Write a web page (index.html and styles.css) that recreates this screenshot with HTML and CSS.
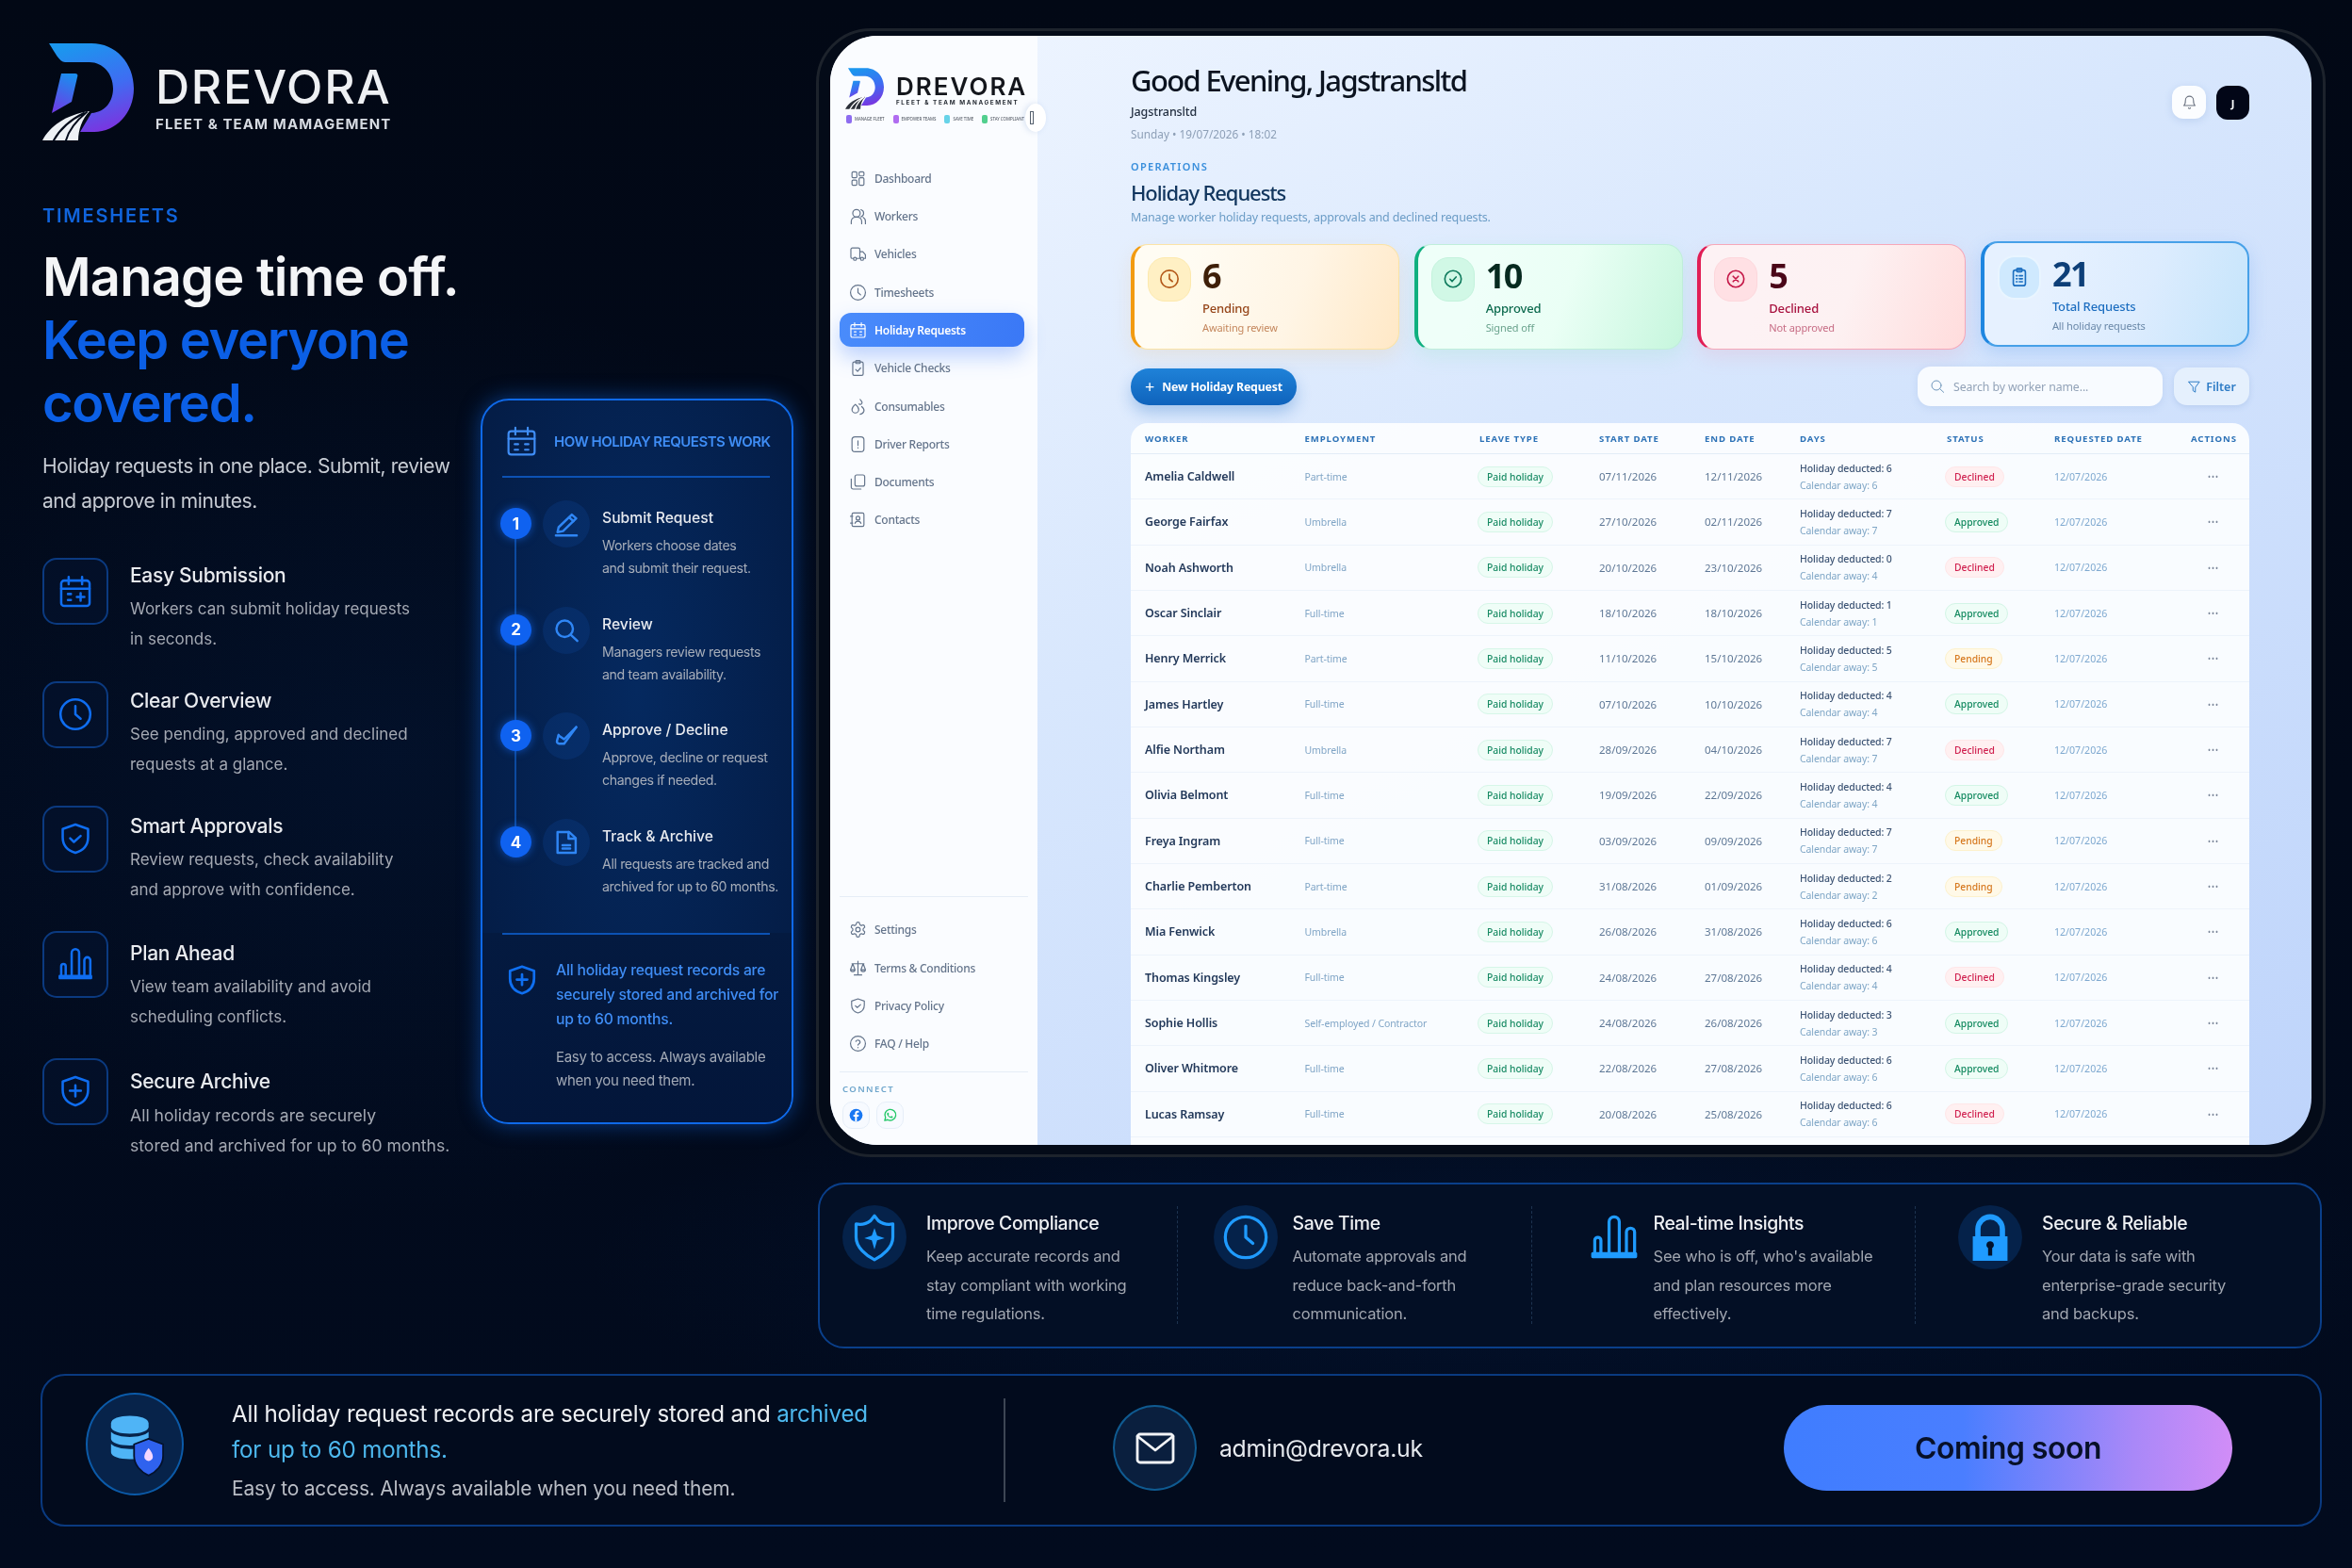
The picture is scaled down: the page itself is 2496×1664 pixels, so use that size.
FILE: index.html
```html
<!DOCTYPE html>
<html lang="en">
<head>
<meta charset="utf-8">
<title>Drevora - Holiday Requests</title>
<link rel="stylesheet" href="styles.css">
</head>
<body>
<svg class="sprite" aria-hidden="true">
  <symbol id="i-cal-plus" viewBox="0 0 24 24"><rect x="2.5" y="4.5" width="19" height="17" rx="2"/><path d="M2.5 10h19M7.5 2v5M16.5 2v5M15.5 13v5M13 15.5h5M7 13.5h2M7 17.5h2"/></symbol>
  <symbol id="i-cal" viewBox="0 0 24 24"><rect x="2.5" y="4.5" width="19" height="17" rx="2"/><path d="M2.5 10h19M7.5 2v5M16.5 2v5M7 14h2.5M14.5 14h2.5M7 18h2.5M14.5 18h2.5"/></symbol>
  <symbol id="i-clock" viewBox="0 0 24 24"><circle cx="12" cy="12" r="10"/><path d="M12 6.5V12l3.5 3"/></symbol>
  <symbol id="i-shield-check" viewBox="0 0 24 24"><path d="M12 2.500l8.500 3V11c0 5.500-3.600 9-8.500 10.500C7.100 20 3.500 16.500 3.500 11V5.500z"/><path d="M8.500 11.800l2.500 2.400 4.500-4"/></symbol>
  <symbol id="i-shield-plus" viewBox="0 0 24 24"><path d="M12 2.500l8.500 3V11c0 5.500-3.600 9-8.500 10.500C7.100 20 3.500 16.500 3.500 11V5.500z"/><path d="M12 8v7.500M8.300 11.700h7.400"/></symbol>
  <symbol id="i-shield-star" viewBox="0 0 24 24"><path d="M12 1.500L14 4c2 1.500 4.500 2 7 1.500V12c0 5-5 9-9 11-4-2-9-6-9-11V5.500C5.500 6 8 5.500 10 4z"/><path fill="currentColor" stroke="none" d="M12 7.500l1.300 3.700 3.700 1.300-3.700 1-1.300 4.500-1.300-4.500-3.700-1 3.700-1.300z"/></symbol>
  <symbol id="i-bars" viewBox="0 0 24 24"><path d="M1.500 21.500h21V20h-21zM2.500 20v-6.500a1.500 1.500 0 0 1 3 0V20M9.500 20V4.500a2.500 2.500 0 0 1 5 0V20M18 20V9.500a2 2 0 0 1 4 0V20"/></symbol>
  <symbol id="i-pencil" viewBox="0 0 24 24"><path d="M5 15L17 3.500l4 3.500L9 18.500l-5 1z"/><path d="M14.500 6l4 3.500M2.500 22.500h19"/></symbol>
  <symbol id="i-search" viewBox="0 0 24 24"><circle cx="10.500" cy="10.500" r="7.500"/><path d="M16 16l6 5.500"/></symbol>
  <symbol id="i-approve" viewBox="0 0 24 24"><path d="M21 4L10 19H5.500a2 2 0 0 1-2-2.500L5 11"/><path d="M5 11.500l5 3.500L21 4"/></symbol>
  <symbol id="i-file" viewBox="0 0 24 24"><path d="M4 2.500h10.500L20.500 8v13.500H4z"/><path d="M14 2.500V8.500h6.500M8.500 14.500h7M8.500 17.500h7"/></symbol>
  <symbol id="i-grid" viewBox="0 0 24 24"><rect x="4" y="3" width="6.500" height="8" rx="1.500"/><rect x="13.500" y="3" width="6.500" height="5.500" rx="1.500"/><rect x="13.500" y="11" width="6.500" height="10" rx="1.500"/><rect x="4" y="14" width="6.500" height="7" rx="1.500"/></symbol>
  <symbol id="i-users" viewBox="0 0 24 24"><circle cx="10" cy="8" r="5"/><path d="M3 22v-3a6 6 0 0 1 6-6h2a6 6 0 0 1 6 6v3M16 3.200a5 5 0 0 1 0 9.600M19 13.500a6 6 0 0 1 3 5.500v3"/></symbol>
  <symbol id="i-truck" viewBox="0 0 24 24"><path d="M6 18H4.500a2 2 0 0 1-2-2V6a2 2 0 0 1 2-2h8a2 2 0 0 1 2 2v12H10M14.500 9h4l3.500 4v5h-2.500"/><circle cx="8" cy="18.500" r="2"/><circle cx="17.500" cy="18.500" r="2"/></symbol>
  <symbol id="i-clip-check" viewBox="0 0 24 24"><rect x="5" y="4" width="14" height="18" rx="2"/><rect x="9" y="2" width="6" height="4" rx="1"/><path d="M9 14l2.500 2.500 4-4.500"/></symbol>
  <symbol id="i-clip-list" viewBox="0 0 24 24"><rect x="5" y="4" width="14" height="18" rx="2.500"/><rect x="9" y="2" width="6" height="4" rx="1"/><path d="M8.500 10.500h1M12 10.500h3.500M8.500 14h1M12 14h3.500M8.500 17.500h1M12 17.500h3.500"/></symbol>
  <symbol id="i-drops" viewBox="0 0 24 24"><path d="M8.500 9c-3 2.500-4.500 5-4.500 7a4.500 4.500 0 0 0 9 0c0-2-1.500-4.500-4.500-7z"/><path d="M15 2.500c1 1.500 2.500 2.500 2.500 4a2.500 2.500 0 0 1-4 2M17 12c2.500 2 3.500 4 3 6a6 6 0 0 1-5 4.200"/></symbol>
  <symbol id="i-report" viewBox="0 0 24 24"><path d="M8 2h8a4 4 0 0 1 4 4v12a4 4 0 0 1-4 4H8a4 4 0 0 1-4-4V6a4 4 0 0 1 4-4z"/><path d="M12 7.500v6M12 16.500v.5"/></symbol>
  <symbol id="i-docs" viewBox="0 0 24 24"><rect x="8" y="2.500" width="13" height="15" rx="2.500"/><path d="M16 21.500H5.500a2.500 2.500 0 0 1-2.500-2.500V8"/></symbol>
  <symbol id="i-contact" viewBox="0 0 24 24"><rect x="4" y="3" width="16" height="18" rx="2"/><circle cx="12" cy="10" r="2.500"/><path d="M8 17c.5-2 2-3 4-3s3.500 1 4 3M2 7.500h3M2 16.500h3"/></symbol>
  <symbol id="i-gear" viewBox="0 0 24 24"><path d="M12.220 2h-.44a2 2 0 0 0-2 2v.18a2 2 0 0 1-1 1.730l-.43.250a2 2 0 0 1-2 0l-.15-.080a2 2 0 0 0-2.730.730l-.22.380a2 2 0 0 0 .730 2.730l.15.100a2 2 0 0 1 1 1.720v.510a2 2 0 0 1-1 1.740l-.15.090a2 2 0 0 0-.730 2.730l.22.380a2 2 0 0 0 2.730.730l.15-.080a2 2 0 0 1 2 0l.43.250a2 2 0 0 1 1 1.730V20a2 2 0 0 0 2 2h.44a2 2 0 0 0 2-2v-.18a2 2 0 0 1 1-1.730l.43-.250a2 2 0 0 1 2 0l.15.080a2 2 0 0 0 2.730-.730l.22-.390a2 2 0 0 0-.730-2.730l-.15-.080a2 2 0 0 1-1-1.740v-.5a2 2 0 0 1 1-1.740l.15-.090a2 2 0 0 0 .730-2.730l-.22-.380a2 2 0 0 0-2.730-.730l-.15.080a2 2 0 0 1-2 0l-.43-.250a2 2 0 0 1-1-1.730V4a2 2 0 0 0-2-2z"/><circle cx="12" cy="12" r="3"/></symbol>
  <symbol id="i-scale" viewBox="0 0 24 24"><path d="M12 2.500V21M7 21h10M4 6h16M5 6L2 14c0 1.500 1.300 2.500 3 2.500S8 15.500 8 14zM19 6l-3 8c0 1.500 1.300 2.500 3 2.500s3-1 3-2.500zM2 14h6M16 14h6"/></symbol>
  <symbol id="i-help" viewBox="0 0 24 24"><circle cx="12" cy="12" r="10"/><path d="M9.200 9a3 3 0 0 1 5.700 1c0 2-2.900 2.500-2.900 4M12 17.200v.3"/></symbol>
  <symbol id="i-check-c" viewBox="0 0 24 24"><circle cx="12" cy="12" r="9.500"/><path d="M8.500 12.300l2.500 2.500 4.500-5"/></symbol>
  <symbol id="i-x-c" viewBox="0 0 24 24"><circle cx="12" cy="12" r="9.500"/><path d="M9 9l6 6M15 9l-6 6"/></symbol>
  <symbol id="i-bell" viewBox="0 0 24 24"><path d="M6 9a6 6 0 0 1 12 0c0 6 2.500 8 2.500 8h-17S6 15 6 9zM10.500 20.500a1.600 1.600 0 0 0 3 0"/></symbol>
  <symbol id="i-funnel" viewBox="0 0 24 24"><path d="M3 3.500h18L14 13v8l-4-2.500V13z"/></symbol>
  <symbol id="i-mail" viewBox="0 0 24 24"><rect x="2.500" y="4.500" width="19" height="15" rx="1.500"/><path d="M2.500 5.500L12 13l9.500-7.500"/></symbol>
</svg>

<main class="page">
  <div class="top">
    <section class="intro">
      <div class="brand">
        <svg class="logo-mark" viewBox="0 0 97 103">
          <defs>
            <linearGradient id="lg1" x1="0.3" y1="0" x2="0.6" y2="1"><stop offset="0" stop-color="#1b97ee"/><stop offset=".55" stop-color="#3f6cf2"/><stop offset="1" stop-color="#7a35e0"/></linearGradient>
            <linearGradient id="lg2" x1="0.6" y1="0" x2="0.3" y2="1"><stop offset="0" stop-color="#1b8dee"/><stop offset="1" stop-color="#6d3de6"/></linearGradient>
          </defs>
          <path fill="url(#lg1)" d="M7 0H52C78 0 97 21 97 48C97 74 78 94 55 94H40L52 74C68 73 75 60 75 48C75 32 64 20 50 20H24C18 20 13 9 7 0Z"/>
          <path fill="url(#lg2)" d="M20 32H34C37 32 38 33 37 36L31 62L10 74Z"/>
          <path fill="#eef1f5" d="M0 103C8 88 24 76 50 72C42 80 38 92 38 103Z"/>
          <path stroke="#020a1a" stroke-width="2" d="M12 103C18 92 28 82 44 74M25 103C28 92 36 82 47 73"/>
        </svg>
        <div class="brand-text">
          <div class="brand-name">DREVORA</div>
          <div class="brand-tag">FLEET &amp; TEAM MAMAGEMENT</div>
        </div>
      </div>
      <div class="eyebrow">TIMESHEETS</div>
      <h1 class="headline">Manage time off.<br><span class="headline-blue">Keep everyone<br>covered.</span></h1>
      <p class="lede">Holiday requests in one place. Submit, review<br>and approve in minutes.</p>
      <ul class="features">
        <li class="feature"><span class="feature-box"><svg class="ic-feature"><use href="#i-cal-plus"/></svg></span><div><h3>Easy Submission</h3><p>Workers can submit holiday requests<br>in seconds.</p></div></li>
        <li class="feature"><span class="feature-box"><svg class="ic-feature"><use href="#i-clock"/></svg></span><div><h3>Clear Overview</h3><p>See pending, approved and declined<br>requests at a glance.</p></div></li>
        <li class="feature"><span class="feature-box"><svg class="ic-feature"><use href="#i-shield-check"/></svg></span><div><h3>Smart Approvals</h3><p>Review requests, check availability<br>and approve with confidence.</p></div></li>
        <li class="feature"><span class="feature-box"><svg class="ic-feature"><use href="#i-bars"/></svg></span><div><h3>Plan Ahead</h3><p>View team availability and avoid<br>scheduling conflicts.</p></div></li>
        <li class="feature"><span class="feature-box"><svg class="ic-feature"><use href="#i-shield-plus"/></svg></span><div><h3>Secure Archive</h3><p>All holiday records are securely<br>stored and archived for up to 60 months.</p></div></li>
      </ul>
    </section>

    <aside class="how">
      <header class="how-head"><svg class="ic-how-head"><use href="#i-cal"/></svg><span>HOW HOLIDAY REQUESTS WORK</span></header>
      <ol class="steps">
        <li class="step"><span class="step-num">1</span><span class="step-icon"><svg><use href="#i-pencil"/></svg></span><div><h4>Submit Request</h4><p>Workers choose dates<br>and submit their request.</p></div></li>
        <li class="step"><span class="step-num">2</span><span class="step-icon"><svg><use href="#i-search"/></svg></span><div><h4>Review</h4><p>Managers review requests<br>and team availability.</p></div></li>
        <li class="step"><span class="step-num">3</span><span class="step-icon"><svg><use href="#i-approve"/></svg></span><div><h4>Approve / Decline</h4><p>Approve, decline or request<br>changes if needed.</p></div></li>
        <li class="step"><span class="step-num">4</span><span class="step-icon"><svg><use href="#i-file"/></svg></span><div><h4>Track &amp; Archive</h4><p>All requests are tracked and<br>archived for up to 60 months.</p></div></li>
      </ol>
      <div class="how-foot">
        <svg class="ic-how-foot"><use href="#i-shield-plus"/></svg>
        <div>
          <p class="how-foot-blue">All holiday request records are<br>securely stored and archived for<br>up to 60 months.</p>
          <p class="how-foot-grey">Easy to access. Always available<br>when you need them.</p>
        </div>
      </div>
    </aside>

    <div class="device">
      <div class="screen">
        <nav class="sidebar">
          <div class="side-brand">
            <svg class="side-mark" viewBox="0 0 97 103">
              <defs>
                <linearGradient id="lg3" x1="0.3" y1="0" x2="0.6" y2="1"><stop offset="0" stop-color="#1b97ee"/><stop offset=".55" stop-color="#3f6cf2"/><stop offset="1" stop-color="#7a35e0"/></linearGradient>
              </defs>
              <path fill="url(#lg3)" d="M7 0H52C78 0 97 21 97 48C97 74 78 94 55 94H40L52 74C68 73 75 60 75 48C75 32 64 20 50 20H24C18 20 13 9 7 0Z"/>
              <path fill="url(#lg3)" d="M20 32H34C37 32 38 33 37 36L31 62L10 74Z"/>
              <path fill="#2b2f38" d="M0 103C8 88 24 76 50 72C42 80 38 92 38 103Z"/>
              <path stroke="#fff" stroke-width="3" d="M12 103C18 92 28 82 44 74M25 103C28 92 36 82 47 73"/>
            </svg>
            <div>
              <div class="side-name">DREVORA</div>
              <div class="side-tag">FLEET &amp; TEAM MANAGEMENT</div>
            </div>
          </div>
          <div class="side-chips">
            <span class="chip chip-a">MANAGE FLEET</span><span class="chip chip-b">EMPOWER TEAMS</span><span class="chip chip-c">SAVE TIME</span><span class="chip chip-d">STAY COMPLIANT</span>
            <span class="collapse"><i></i></span>
          </div>
          <ul class="nav-list">
            <li class="nav-item"><svg><use href="#i-grid"/></svg>Dashboard</li>
            <li class="nav-item"><svg><use href="#i-users"/></svg>Workers</li>
            <li class="nav-item"><svg><use href="#i-truck"/></svg>Vehicles</li>
            <li class="nav-item"><svg><use href="#i-clock"/></svg>Timesheets</li>
            <li class="nav-item nav-active"><svg><use href="#i-cal"/></svg>Holiday Requests</li>
            <li class="nav-item"><svg><use href="#i-clip-check"/></svg>Vehicle Checks</li>
            <li class="nav-item"><svg><use href="#i-drops"/></svg>Consumables</li>
            <li class="nav-item"><svg><use href="#i-report"/></svg>Driver Reports</li>
            <li class="nav-item"><svg><use href="#i-docs"/></svg>Documents</li>
            <li class="nav-item"><svg><use href="#i-contact"/></svg>Contacts</li>
          </ul>
          <div class="side-bottom">
            <ul class="nav-list">
              <li class="nav-item"><svg><use href="#i-gear"/></svg>Settings</li>
              <li class="nav-item"><svg><use href="#i-scale"/></svg>Terms &amp; Conditions</li>
              <li class="nav-item"><svg><use href="#i-shield-check"/></svg>Privacy Policy</li>
              <li class="nav-item"><svg><use href="#i-help"/></svg>FAQ / Help</li>
            </ul>
            <div class="connect">
              <div class="connect-label">CONNECT</div>
              <div class="social-row">
                <span class="social"><svg viewBox="0 0 24 24"><circle cx="12" cy="12" r="11" fill="#1877f2"/><path fill="#fff" d="M13.400 23v-8.500h2.800l.5-3.300h-3.300V9.100c0-1 .4-1.600 1.700-1.600h1.700V4.600c-.8-.1-1.600-.2-2.400-.2-2.500 0-4.200 1.500-4.200 4.300v2.500H7.400v3.300h2.800V23z"/></svg></span>
                <span class="social"><svg viewBox="0 0 24 24"><path fill="none" stroke="#25c869" stroke-width="2.200" d="M3 21l1.400-5A9.300 9.300 0 1 1 8 19.600z"/><path fill="#25c869" d="M8.700 7.400c.3 0 .6 0 .8.600l.7 1.700c.1.200 0 .5-.1.700l-.6.700c-.2.200-.2.400 0 .7.700 1.200 1.700 2.100 3 2.700.3.100.500.100.7-.100l.8-1c.2-.2.400-.3.700-.2l1.700.8c.3.100.5.300.5.500 0 1.600-1.300 2.400-2.600 2.400-3.400-.4-7.300-3.700-7.500-7.200 0-1.200.6-2.300 1.900-2.300z"/></svg></span>
              </div>
            </div>
          </div>
        </nav>

        <div class="content">
          <header class="greet">
            <div class="greet-text">
              <h2>Good Evening, Jagstransltd</h2>
              <div class="greet-co">Jagstransltd</div>
              <div class="greet-date">Sunday • 19/07/2026 • 18:02</div>
            </div>
            <div class="greet-actions">
              <span class="bell"><svg><use href="#i-bell"/></svg></span>
              <span class="avatar">J</span>
            </div>
          </header>
          <div class="section-eyebrow">OPERATIONS</div>
          <h3 class="section-title">Holiday Requests</h3>
          <p class="section-sub">Manage worker holiday requests, approvals and declined requests.</p>

          <div class="stats">
            <article class="stat stat-pending"><span class="stat-tile"><svg><use href="#i-clock"/></svg></span><div><div class="stat-num">6</div><div class="stat-label">Pending</div><div class="stat-note">Awaiting review</div></div></article>
            <article class="stat stat-approved"><span class="stat-tile"><svg><use href="#i-check-c"/></svg></span><div><div class="stat-num">10</div><div class="stat-label">Approved</div><div class="stat-note">Signed off</div></div></article>
            <article class="stat stat-declined"><span class="stat-tile"><svg><use href="#i-x-c"/></svg></span><div><div class="stat-num">5</div><div class="stat-label">Declined</div><div class="stat-note">Not approved</div></div></article>
            <article class="stat stat-total"><span class="stat-tile"><svg><use href="#i-clip-list"/></svg></span><div><div class="stat-num">21</div><div class="stat-label">Total Requests</div><div class="stat-note">All holiday requests</div></div></article>
          </div>

          <div class="toolbar">
            <button class="btn-new"><span class="btn-plus">+</span>New Holiday Request</button>
            <label class="search"><svg><use href="#i-search"/></svg><span>Search by worker name...</span></label>
            <button class="btn-filter"><svg><use href="#i-funnel"/></svg>Filter</button>
          </div>

          <div class="table">
            <div class="row row-head"><span>WORKER</span><span>EMPLOYMENT</span><span>LEAVE TYPE</span><span>START DATE</span><span>END DATE</span><span>DAYS</span><span>STATUS</span><span>REQUESTED DATE</span><span>ACTIONS</span></div>
            <div class="row"><span class="c-name">Amelia Caldwell</span><span class="c-emp">Part-time</span><span class="pill pill-paid">Paid holiday</span><span class="c-date">07/11/2026</span><span class="c-date">12/11/2026</span><div class="c-days"><b>Holiday deducted: 6</b><i>Calendar away: 6</i></div><span class="pill pill-declined">Declined</span><span class="c-req">12/07/2026</span><span class="c-act">•••</span></div>
            <div class="row"><span class="c-name">George Fairfax</span><span class="c-emp">Umbrella</span><span class="pill pill-paid">Paid holiday</span><span class="c-date">27/10/2026</span><span class="c-date">02/11/2026</span><div class="c-days"><b>Holiday deducted: 7</b><i>Calendar away: 7</i></div><span class="pill pill-approved">Approved</span><span class="c-req">12/07/2026</span><span class="c-act">•••</span></div>
            <div class="row"><span class="c-name">Noah Ashworth</span><span class="c-emp">Umbrella</span><span class="pill pill-paid">Paid holiday</span><span class="c-date">20/10/2026</span><span class="c-date">23/10/2026</span><div class="c-days"><b>Holiday deducted: 0</b><i>Calendar away: 4</i></div><span class="pill pill-declined">Declined</span><span class="c-req">12/07/2026</span><span class="c-act">•••</span></div>
            <div class="row"><span class="c-name">Oscar Sinclair</span><span class="c-emp">Full-time</span><span class="pill pill-paid">Paid holiday</span><span class="c-date">18/10/2026</span><span class="c-date">18/10/2026</span><div class="c-days"><b>Holiday deducted: 1</b><i>Calendar away: 1</i></div><span class="pill pill-approved">Approved</span><span class="c-req">12/07/2026</span><span class="c-act">•••</span></div>
            <div class="row"><span class="c-name">Henry Merrick</span><span class="c-emp">Part-time</span><span class="pill pill-paid">Paid holiday</span><span class="c-date">11/10/2026</span><span class="c-date">15/10/2026</span><div class="c-days"><b>Holiday deducted: 5</b><i>Calendar away: 5</i></div><span class="pill pill-pending">Pending</span><span class="c-req">12/07/2026</span><span class="c-act">•••</span></div>
            <div class="row"><span class="c-name">James Hartley</span><span class="c-emp">Full-time</span><span class="pill pill-paid">Paid holiday</span><span class="c-date">07/10/2026</span><span class="c-date">10/10/2026</span><div class="c-days"><b>Holiday deducted: 4</b><i>Calendar away: 4</i></div><span class="pill pill-approved">Approved</span><span class="c-req">12/07/2026</span><span class="c-act">•••</span></div>
            <div class="row"><span class="c-name">Alfie Northam</span><span class="c-emp">Umbrella</span><span class="pill pill-paid">Paid holiday</span><span class="c-date">28/09/2026</span><span class="c-date">04/10/2026</span><div class="c-days"><b>Holiday deducted: 7</b><i>Calendar away: 7</i></div><span class="pill pill-declined">Declined</span><span class="c-req">12/07/2026</span><span class="c-act">•••</span></div>
            <div class="row"><span class="c-name">Olivia Belmont</span><span class="c-emp">Full-time</span><span class="pill pill-paid">Paid holiday</span><span class="c-date">19/09/2026</span><span class="c-date">22/09/2026</span><div class="c-days"><b>Holiday deducted: 4</b><i>Calendar away: 4</i></div><span class="pill pill-approved">Approved</span><span class="c-req">12/07/2026</span><span class="c-act">•••</span></div>
            <div class="row"><span class="c-name">Freya Ingram</span><span class="c-emp">Full-time</span><span class="pill pill-paid">Paid holiday</span><span class="c-date">03/09/2026</span><span class="c-date">09/09/2026</span><div class="c-days"><b>Holiday deducted: 7</b><i>Calendar away: 7</i></div><span class="pill pill-pending">Pending</span><span class="c-req">12/07/2026</span><span class="c-act">•••</span></div>
            <div class="row"><span class="c-name">Charlie Pemberton</span><span class="c-emp">Part-time</span><span class="pill pill-paid">Paid holiday</span><span class="c-date">31/08/2026</span><span class="c-date">01/09/2026</span><div class="c-days"><b>Holiday deducted: 2</b><i>Calendar away: 2</i></div><span class="pill pill-pending">Pending</span><span class="c-req">12/07/2026</span><span class="c-act">•••</span></div>
            <div class="row"><span class="c-name">Mia Fenwick</span><span class="c-emp">Umbrella</span><span class="pill pill-paid">Paid holiday</span><span class="c-date">26/08/2026</span><span class="c-date">31/08/2026</span><div class="c-days"><b>Holiday deducted: 6</b><i>Calendar away: 6</i></div><span class="pill pill-approved">Approved</span><span class="c-req">12/07/2026</span><span class="c-act">•••</span></div>
            <div class="row"><span class="c-name">Thomas Kingsley</span><span class="c-emp">Full-time</span><span class="pill pill-paid">Paid holiday</span><span class="c-date">24/08/2026</span><span class="c-date">27/08/2026</span><div class="c-days"><b>Holiday deducted: 4</b><i>Calendar away: 4</i></div><span class="pill pill-declined">Declined</span><span class="c-req">12/07/2026</span><span class="c-act">•••</span></div>
            <div class="row"><span class="c-name">Sophie Hollis</span><span class="c-emp">Self-employed / Contractor</span><span class="pill pill-paid">Paid holiday</span><span class="c-date">24/08/2026</span><span class="c-date">26/08/2026</span><div class="c-days"><b>Holiday deducted: 3</b><i>Calendar away: 3</i></div><span class="pill pill-approved">Approved</span><span class="c-req">12/07/2026</span><span class="c-act">•••</span></div>
            <div class="row"><span class="c-name">Oliver Whitmore</span><span class="c-emp">Full-time</span><span class="pill pill-paid">Paid holiday</span><span class="c-date">22/08/2026</span><span class="c-date">27/08/2026</span><div class="c-days"><b>Holiday deducted: 6</b><i>Calendar away: 6</i></div><span class="pill pill-approved">Approved</span><span class="c-req">12/07/2026</span><span class="c-act">•••</span></div>
            <div class="row"><span class="c-name">Lucas Ramsay</span><span class="c-emp">Full-time</span><span class="pill pill-paid">Paid holiday</span><span class="c-date">20/08/2026</span><span class="c-date">25/08/2026</span><div class="c-days"><b>Holiday deducted: 6</b><i>Calendar away: 6</i></div><span class="pill pill-declined">Declined</span><span class="c-req">12/07/2026</span><span class="c-act">•••</span></div>
          </div>
        </div>
      </div>
    </div>
  </div>

  <section class="strip">
    <div class="benefit benefit-1"><span class="halo"><svg><use href="#i-shield-star"/></svg></span><div><h4>Improve Compliance</h4><p>Keep accurate records and<br>stay compliant with working<br>time regulations.</p></div></div>
    <div class="benefit benefit-2"><span class="halo"><svg><use href="#i-clock"/></svg></span><div><h4>Save Time</h4><p>Automate approvals and<br>reduce back-and-forth<br>communication.</p></div></div>
    <div class="benefit benefit-3"><span class="halo halo-none"><svg><use href="#i-bars"/></svg></span><div><h4>Real-time Insights</h4><p>See who is off, who's available<br>and plan resources more<br>effectively.</p></div></div>
    <div class="benefit benefit-4"><span class="halo"><svg viewBox="0 0 24 24" class="ic-lock"><path fill="none" stroke="#1f9bff" stroke-width="2.600" d="M6 12V8a6 6 0 0 1 12 0v4"/><path fill="#1f9bff" d="M3.500 11.500h17v12h-17z"/><path fill="#03122b" d="M12 14a1.800 1.800 0 0 1 1 3.300V21h-2v-3.700A1.800 1.800 0 0 1 12 14z"/></svg></span><div><h4>Secure &amp; Reliable</h4><p>Your data is safe with<br>enterprise-grade security<br>and backups.</p></div></div>
  </section>

  <section class="band">
    <span class="db-circle">
      <svg viewBox="0 0 64 72" class="ic-db">
        <path fill="#4fb4f6" d="M2 9C2 3 12 0 24 0s22 3 22 9v4c0 5-10 8-22 8S2 18 2 13z"/>
        <path fill="#4fb4f6" d="M2 19c4 4 13 6 22 6s18-2 22-6v8c0 5-10 8-22 8S2 32 2 27z"/>
        <path fill="#4fb4f6" d="M2 33c4 4 13 6 22 6 4 0 8-.4 11-1.200V50c-4 .6-7 1-11 1-12 0-22-3-22-8z"/>
        <path fill="#2f62ee" stroke="#04122c" stroke-width="2" d="M46 27l17 6.500V47c0 11-8 19-17 23-9-4-17-12-17-23V33.500z"/>
        <path fill="#f6d8ff" d="M46 38c3 4 5 7 5 10a5 5 0 0 1-10 0c0-3 2-6 5-10z"/>
      </svg>
    </span>
    <div class="band-text">
      <p class="band-main">All holiday request records are securely stored and <em>archived<br>for up to 60 months.</em></p>
      <p class="band-sub">Easy to access. Always available when you need them.</p>
    </div>
    <span class="band-rule"></span>
    <span class="mail-circle"><svg><use href="#i-mail"/></svg></span>
    <span class="mail-text">admin@drevora.uk</span>
    <button class="coming">Coming soon</button>
  </section>
</main>
</body>
</html>
```
FILE: styles.css
```css
* { box-sizing: border-box; }
html, body { margin: 0; padding: 0; }
body {
  width: 2496px; height: 1664px; overflow: hidden;
  background: #020a1a;
  font-family: "Inter", "Liberation Sans", sans-serif;
  color: #fff;
}
h1, h2, h3, h4, p, ul, ol { margin: 0; padding: 0; }
ul, ol { list-style: none; }
button { font: inherit; border: 0; }
.sprite { position: absolute; width: 0; height: 0; overflow: hidden; }
svg { fill: none; stroke: currentColor; stroke-linecap: round; stroke-linejoin: round; display: block; }

.page {
  width: 2496px; height: 1664px;
  padding: 30px 32px 0 43px;
  display: flex; flex-direction: column;
  filter: blur(.35px);
  background:
    radial-gradient(ellipse 900px 700px at 420px 800px, rgba(6, 48, 110, .18), transparent 70%),
    radial-gradient(ellipse 1400px 300px at 1600px 1340px, rgba(5, 50, 120, .18), transparent 70%),
    linear-gradient(180deg, #020815, #020a1b 50%, #020b1e);
}
.top { display: flex; height: 1198px; }

/* intro column */
.intro { width: 467px; flex: none; padding-left: 2px; }
.brand { display: flex; margin-top: 16px; height: 103px; }
.logo-mark { width: 97px; height: 103px; flex: none; stroke: none; }
.brand-text { margin-left: 23px; padding-top: 20px; }
.brand-name { font-size: 50px; line-height: 52px; font-weight: 500; letter-spacing: 1.700px; color: #eef0f3; }
.brand-tag { font-size: 15px; line-height: 18px; font-weight: 700; letter-spacing: 1.100px; color: #d7dbe2; margin-top: 5px; white-space: nowrap; }
.eyebrow { margin-top: 66px; font-size: 20px; line-height: 28px; font-weight: 600; letter-spacing: 1.800px; color: #1064dc; }
.headline { margin-top: 18px; font-size: 56px; line-height: 67px; font-weight: 600; color: #f4f5f7; letter-spacing: -.8px; white-space: nowrap; }
.headline-blue { color: #0b5fe6; letter-spacing: -1.350px; }
.lede { margin-top: 14px; font-size: 21px; line-height: 37px; color: #c7ccd4; letter-spacing: -.42px; white-space: nowrap; }
.features { margin-top: 42px; display: flex; flex-direction: column; }
.feature { display: flex; height: 130.500px; flex: none; }
.feature:nth-child(2) { height: 132px; }
.feature:nth-child(3) { height: 133px; }
.feature:nth-child(4) { height: 135px; }
.feature:nth-child(2) h3 { padding-top: 6px; }
.feature:nth-child(3) h3 { padding-top: 7px; }
.feature:nth-child(4) h3 { padding-top: 9px; }
.feature:nth-child(5) h3 { padding-top: 10px; }
.feature:nth-child(5) p { font-size: 17.600px; margin-top: 5px; }
.feature-box {
  width: 70px; height: 71px; flex: none; border: 2px solid #0b3a80; border-radius: 15px;
  display: flex; align-items: center; justify-content: center; margin-right: 23px;
  background: rgba(3, 20, 50, .5); color: #0f6df0;
}
.ic-feature { width: 38px; height: 38px; stroke-width: 1.600; }
.feature h3 { font-size: 21px; line-height: 30px; font-weight: 500; color: #e9ebef; padding-top: 4px; white-space: nowrap; letter-spacing: -.3px; }
.feature p { margin-top: 4px; font-size: 17px; line-height: 32px; color: #a4a9b3; white-space: nowrap; }

/* how panel */
.how {
  width: 332px; height: 770px; margin-top: 393px; flex: none;
  border: 2px solid #0f69e8; border-radius: 30px;
  background: radial-gradient(ellipse at 50% 40%, #05295f, #041d47 80%);
  box-shadow: 0 0 22px rgba(15, 105, 232, .5);
  display: flex; flex-direction: column;
  overflow: hidden;
}
.how-head {
  margin: 27px 23px 0 21px; padding: 0 0 20px 3px;
  display: flex; align-items: center; gap: 17px; border-bottom: 2px solid #0c52b4;
  height: 55px;
  font-size: 15px; font-weight: 600; color: #3f8df5; white-space: nowrap; letter-spacing: -.5px;
}
.ic-how-head { width: 35px; height: 35px; stroke-width: 1.500; color: #3f8df5; flex: none; }
.steps { margin-top: 32px; position: relative; }
.steps::before { content: ""; position: absolute; left: 34px; top: 20px; bottom: 90px; width: 2px; background: #0c4aa0; }
.step { height: 112.700px; display: flex; padding-left: 19px; position: relative; }
.step-num {
  width: 33px; height: 33px; border-radius: 50%; flex: none; background: #0f62f0; color: #fff;
  font-size: 17px; font-weight: 700; display: flex; align-items: center; justify-content: center;
  box-shadow: 0 0 10px rgba(20, 110, 255, .6);
}
.step-icon {
  width: 50px; height: 50px; border-radius: 50%; flex: none; margin: -8px 13px 0 12px;
  background: rgba(15, 70, 150, .28); color: #2f86f5; display: flex; align-items: center; justify-content: center;
}
.step-icon svg { width: 28px; height: 28px; stroke-width: 2.100; }
.step h4 { font-size: 15.700px; line-height: 22px; font-weight: 500; color: #e7eaef; white-space: nowrap; }
.step p { margin-top: 6px; font-size: 14.200px; line-height: 24px; color: #a6adb9; white-space: nowrap; letter-spacing: -.38px; }
.how-foot {
  flex: 1; margin: 0; padding: 27px 0 0 24px; display: flex; gap: 18px;
  background: linear-gradient(180deg, #041a40, #03163a);
  position: relative;
}
.how-foot::before { content: ""; position: absolute; left: 21px; right: 23px; top: 0; height: 2px; background: #0c52b4; }
.ic-how-foot { width: 36px; height: 40px; flex: none; color: #0f6ff0; stroke-width: 1.800; margin-top: 3px; }
.how-foot-blue { font-size: 15.700px; line-height: 26px; font-weight: 500; color: #3f8df5; white-space: nowrap; letter-spacing: -.2px; }
.how-foot-grey { margin-top: 14px; font-size: 15px; line-height: 25px; color: #a3aab6; white-space: nowrap; letter-spacing: -.3px; }

/* device */
.device {
  width: 1602px; height: 1198px; margin-left: 24px; flex: none;
  border: 3px solid #1d232c; border-radius: 58px;
  padding: 5px 12px 10px 12px;
  background: #040b18;
}
.screen {
  display: flex; height: 100%; border-radius: 50px; overflow: hidden;
  font-family: "Noto Sans", "Open Sans", sans-serif;
  background: linear-gradient(150deg, #f0f6ff 0%, #d8e7fd 40%, #bed4fb 100%);
}
.sidebar { width: 220px; flex: none; background: #fafcff; display: flex; flex-direction: column; color: #64748b; }
.side-brand { display: flex; padding: 34px 0 0 16px; height: 78px; }
.side-mark { width: 41px; height: 44px; stroke: none; flex: none; }
.side-name { margin: 9px 0 0 13px; font-size: 26px; line-height: 22px; font-weight: 600; letter-spacing: 2px; color: #14161c; font-family: "Inter", sans-serif; }
.side-tag { margin: 3px 0 0 13px; font-size: 6.300px; line-height: 7px; font-weight: 700; letter-spacing: 1.600px; color: #262b33; font-family: "Inter", sans-serif; white-space: nowrap; }
.side-chips { display: flex; gap: 9px; padding: 5px 0 0 17px; height: 53px; position: relative; align-items: flex-start; }
.chip { font-size: 4.400px; line-height: 10px; white-space: nowrap; color: #444a55; display: flex; align-items: center; gap: 3px; }
.chip::before { content: ""; width: 6px; height: 9px; border-radius: 2px; background: #8d6cf0; }
.chip-b::before { background: #b06cf0; }
.chip-c::before { background: #67d3e8; }
.chip-d::before { background: #52cf8e; }
.collapse {
  position: absolute; right: -9px; top: -6px; width: 22px; height: 30px; border-radius: 50%;
  background: #fff; box-shadow: -2px 0 6px rgba(90, 130, 190, .2);
}
.collapse i { position: absolute; left: 5px; top: 8px; width: 4px; height: 14px; border: 1px solid #55606e; }
.nav-list { display: flex; flex-direction: column; }
.nav-item {
  height: 36px; margin: 2.170px 14px 2.170px 10px; border-radius: 12px; flex: none;
  display: flex; align-items: center; padding-left: 10px; gap: 8px;
  font-size: 12px; font-weight: 500; color: #64748b; white-space: nowrap; letter-spacing: -.27px;
}
.nav-item svg { width: 19px; height: 19px; flex: none; stroke-width: 1.500; color: #64748b; }
.nav-active {
  background: linear-gradient(100deg, #4a8cfb, #3a78f6); color: #fff; font-weight: 600;
  box-shadow: 0 10px 22px rgba(70, 130, 250, .35);
}
.nav-active svg { color: #fff; }
.side-bottom { margin-top: auto; }
.side-bottom .nav-list { margin: 0 10px; padding: 15px 0 9px; border-top: 1px solid #e5edf6; border-bottom: 1px solid #e5edf6; }
.side-bottom .nav-item { margin: 2.170px 0; }
.connect { padding: 11px 0 17px 13px; }
.connect-label { font-size: 9.500px; line-height: 14px; font-weight: 600; letter-spacing: 1.400px; color: #6fa6cc; }
.social-row { display: flex; gap: 7px; margin-top: 6px; }
.social { width: 29px; height: 29px; border: 1px solid #e6eef8; border-radius: 10px; display: flex; align-items: center; justify-content: center; background: #f7faff; }
.social svg { width: 15px; height: 15px; stroke: none; }

.content { flex: 1; min-width: 0; padding: 0 66px 0 99px; display: flex; flex-direction: column; overflow: hidden; }
.greet { display: flex; justify-content: space-between; padding-top: 27px; }
.greet h2 { font-size: 31px; line-height: 40px; font-weight: 500; color: #0b1320; letter-spacing: -1.650px; white-space: nowrap; }
.greet-co { margin-top: 5px; font-size: 12.500px; line-height: 18px; font-weight: 500; color: #232f40; letter-spacing: -.1px; }
.greet-date { margin-top: 5px; font-size: 11.800px; line-height: 18px; color: #8d9fb6; }
.greet-actions { display: flex; gap: 11px; margin-top: 26px; }
.bell { width: 36px; height: 35px; border-radius: 12px; background: #fbfdff; display: flex; align-items: center; justify-content: center; color: #6b7380; box-shadow: 0 2px 8px rgba(90, 130, 190, .2); }
.bell svg { width: 17px; height: 17px; stroke-width: 1.500; }
.avatar { width: 35px; height: 36px; border-radius: 12px; background: #020617; color: #fff; font-size: 11px; font-weight: 700; display: flex; align-items: center; justify-content: center; }
.section-eyebrow { margin-top: 18px; font-size: 11px; line-height: 16px; font-weight: 600; letter-spacing: 1.300px; color: #3a8fdc; }
.section-title { margin-top: 4px; font-size: 22px; line-height: 30px; font-weight: 500; color: #12365e; letter-spacing: -1.100px; }
.section-sub { margin-top: 3px; font-size: 12.500px; line-height: 18px; color: #6b9cc6; letter-spacing: -.17px; }

.stats { margin-top: 19px; display: grid; grid-template-columns: repeat(4, 1fr); gap: 15.500px; height: 112px; flex: none; }
.stat { display: flex; gap: 12px; padding: 12.500px 0 0 14px; border-radius: 18px; border: 1.500px solid; border-left-width: 4px; }
.stat-tile { width: 46px; height: 47px; flex: none; border-radius: 18px; display: flex; align-items: center; justify-content: center; }
.stat-tile svg { width: 22px; height: 22px; stroke-width: 1.800; }
.stat-num { font-size: 36px; line-height: 40px; font-weight: 700; letter-spacing: -1.500px; }
.stat-label { margin-top: 4px; font-size: 13px; line-height: 20px; font-weight: 500; letter-spacing: -.15px; }
.stat-note { margin-top: 2px; font-size: 11px; line-height: 18px; letter-spacing: -.1px; }
.stat-pending { background: linear-gradient(110deg, #fffcf3 20%, #fff5e5 60%, #ffe8c6); border-color: #fbe3a6; border-left-color: #f29b11; box-shadow: 0 8px 20px rgba(240, 190, 120, .2); }
.stat-pending .stat-tile { background: #fff0c4; border: 1px solid #fde9ad; color: #b4591a; }
.stat-pending .stat-num { color: #3e1f08; }
.stat-pending .stat-label { color: #96461a; }
.stat-pending .stat-note { color: #c4865c; }
.stat-approved { background: linear-gradient(110deg, #effff9 25%, #eafff5 55%, #c6f6dd); border-color: #bfeeda; border-left-color: #10b07f; box-shadow: 0 8px 20px rgba(120, 220, 180, .18); }
.stat-approved .stat-tile { background: #d1f8e6; border: 1px solid #c3f2dc; color: #0e7a5c; }
.stat-approved .stat-num { color: #06291f; }
.stat-approved .stat-label { color: #0d6a4e; }
.stat-approved .stat-note { color: #6aa38d; }
.stat-declined { background: linear-gradient(110deg, #fdf2f4 25%, #fdf1f2 55%, #ffdcdc); border-color: #f6a7b8; border-left-color: #e11d55; box-shadow: 0 8px 20px rgba(240, 140, 160, .18); }
.stat-declined .stat-tile { background: #ffe0e4; border: 1px solid #fdd7dc; color: #c41848; }
.stat-declined .stat-num { color: #4a0618; }
.stat-declined .stat-label { color: #a8123f; }
.stat-declined .stat-note { color: #c76d85; }
.stat-total { background: linear-gradient(110deg, #e6f1ff 25%, #dcecfe 60%, #c4e4fb); border: 2px solid #46a0e8; border-left: 4px solid #1e86e0; transform: translateY(-3px); box-shadow: 0 6px 18px rgba(80, 150, 240, .25); }
.stat-total .stat-tile { background: #cfe9fe; border: 2px solid #e9f5ff; color: #1d6fc0; }
.stat-total .stat-num { color: #0d3f78; }
.stat-total .stat-label { color: #1d6ec0; }
.stat-total .stat-note { color: #6a88a8; }

.toolbar { margin-top: 19px; height: 40px; flex: none; display: flex; align-items: center; }
.btn-new {
  width: 176px; height: 39px; border-radius: 19px; color: #fff; font-family: inherit; font-size: 12.300px; font-weight: 700; letter-spacing: -.15px;
  background: linear-gradient(180deg, #1f82d8, #0f63bc); box-shadow: 0 8px 16px rgba(30, 110, 200, .3);
  display: flex; align-items: center; justify-content: center; gap: 8px;
}
.btn-plus { font-size: 18px; font-weight: 400; line-height: 18px; }
.search {
  margin-left: auto; width: 260px; height: 42px; border-radius: 14px; background: #f8fbff; display: flex; align-items: center; gap: 9px; padding-left: 13px;
  font-size: 12.300px; color: #93a3b8; box-shadow: 0 2px 8px rgba(90, 130, 190, .15); letter-spacing: -.1px;
}
.search svg { width: 16px; height: 16px; stroke-width: 1.500; color: #6f96bb; }
.btn-filter {
  margin-left: 12px; width: 80px; height: 40px; border-radius: 14px; background: #e5f0fd; color: #2e7cc6;
  font-family: inherit; font-size: 12.500px; font-weight: 600; display: flex; align-items: center; justify-content: center; gap: 5px;
  box-shadow: 0 2px 6px rgba(90, 130, 190, .2);
}
.btn-filter svg { width: 15px; height: 15px; stroke-width: 1.600; }

.table { margin-top: 19px; flex: 1; background: rgba(251, 253, 255, .96); border-radius: 18px 18px 0 0; overflow: hidden; }
.row {
  display: grid; grid-template-columns: 169.500px 185.500px 127px 112px 101px 156px 114px 145px 48px;
  align-items: center; height: 48.330px; padding-left: 15px; border-bottom: 1px solid #edf3fb;
  font-size: 10.800px; white-space: nowrap;
}
.row-head { height: 33px; border-bottom: 1px solid #e2ecf7; font-size: 9.600px; font-weight: 700; letter-spacing: .9px; color: #2d72b7; }
.c-name { font-size: 12.500px; font-weight: 600; color: #23395a; letter-spacing: -.1px; }
.c-emp { font-size: 10.500px; color: #80a5c6; letter-spacing: -.1px; }
.c-date { font-size: 11.500px; color: #5f7896; }
.c-req { font-size: 10.600px; color: #7fa9d0; }
.c-act { color: #7a8699; font-size: 8px; letter-spacing: 1px; text-align: center; }
.c-days b { display: block; font-size: 10.500px; line-height: 18px; font-weight: 500; color: #3d5474; letter-spacing: -.1px; }
.c-days i { display: block; font-size: 10.500px; line-height: 18px; font-style: normal; color: #7fa6c6; letter-spacing: -.1px; }
.pill { justify-self: start; margin-left: -2px; height: 22px; padding: 0 9px; border-radius: 11px; border: 1px solid; font-size: 10.300px; font-weight: 500; display: flex; align-items: center; }
.pill-paid { background: #effdf7; border-color: #d6f6e8; color: #178a63; }
.pill-approved { background: #effdf7; border-color: #d3f5e6; color: #148a60; }
.pill-declined { background: #fff0f1; border-color: #ffe6e8; color: #d0204f; }
.pill-pending { background: #fff9e8; border-color: #fdf1cc; color: #d6781e; }

/* strip */
.strip {
  width: 1596px; height: 176px; margin: 27px 0 0 825px; flex: none;
  border: 2px solid #0a3f8a; border-radius: 28px; background: #030f25;
  display: grid; grid-template-columns: 379px 375.500px 407.500px 1fr;
}
.benefit { display: flex; padding-top: 22px; position: relative; }
.benefit + .benefit::before { content: ""; position: absolute; left: 0; top: 23px; bottom: 24px; border-left: 1px dashed #1d3350; }
.benefit-1 { padding-left: 24px; gap: 21px; }
.benefit-2 { padding-left: 39px; gap: 15.500px; }
.benefit-3 { padding-left: 54px; gap: 8px; }
.benefit-4 { padding-left: 46px; gap: 21px; }
.halo { width: 68px; height: 68px; border-radius: 50%; background: #05224a; flex: none; display: flex; align-items: center; justify-content: center; color: #1f9bff; }
.halo svg { width: 52px; height: 52px; stroke-width: 1.500; }
.halo .ic-lock { stroke: none; }
.halo-none { background: none; }
.benefit h4 { margin-top: 5px; font-size: 19.400px; line-height: 28px; font-weight: 500; color: #eef0f3; letter-spacing: -.4px; white-space: nowrap; }
.benefit p { margin-top: 6px; font-size: 16.500px; line-height: 30.500px; color: #a1a6b0; letter-spacing: -.2px; white-space: nowrap; }

/* band */
.band {
  width: 2421px; height: 162px; margin-top: 27px; flex: none;
  border: 2px solid #0a3a80; border-radius: 26px; background: #020b1d;
  display: flex; align-items: center; padding-left: 46px;
}
.db-circle { width: 104px; height: 109px; margin-bottom: 13px; border-radius: 50%; border: 2px solid #0b5aa8; background: #07234a; flex: none; display: flex; align-items: center; justify-content: center; }
.ic-db { width: 58px; height: 66px; stroke: none; margin-left: 4px; margin-top: 4px; }
.band-text { width: 870px; padding-left: 51px; flex: none; padding-top: 2px; }
.band-main { font-size: 24.200px; line-height: 38px; color: #eef0f3; letter-spacing: -.19px; white-space: nowrap; }
.band-main em { font-style: normal; color: #4db8ee; }
.band-sub { margin-top: 3px; font-size: 21px; line-height: 38px; color: #b9bdc5; letter-spacing: -.2px; white-space: nowrap; }
.band-rule { width: 2px; height: 110px; background: #3d4654; flex: none; }
.mail-circle { width: 89px; height: 91px; margin: 0 0 5px 114px; border-radius: 50%; border: 2px solid #0f5a90; background: #0a1f3e; flex: none; color: #f2f4f7; display: flex; align-items: center; justify-content: center; }
.mail-circle svg { width: 48px; height: 48px; stroke-width: 1.400; }
.mail-text { margin: 0 0 5px 24px; font-size: 24.800px; color: #e6e9ee; letter-spacing: -.3px; }
.coming {
  margin: 0 93px 5px auto; width: 476px; height: 91px; border-radius: 46px;
  background: linear-gradient(90deg, #3f7dff 0%, #4a7eff 40%, #a988f8 78%, #d18df7 100%);
  color: #071028; font-family: "Inter", sans-serif; font-size: 31.800px; font-weight: 600; letter-spacing: -.45px;
}
```
